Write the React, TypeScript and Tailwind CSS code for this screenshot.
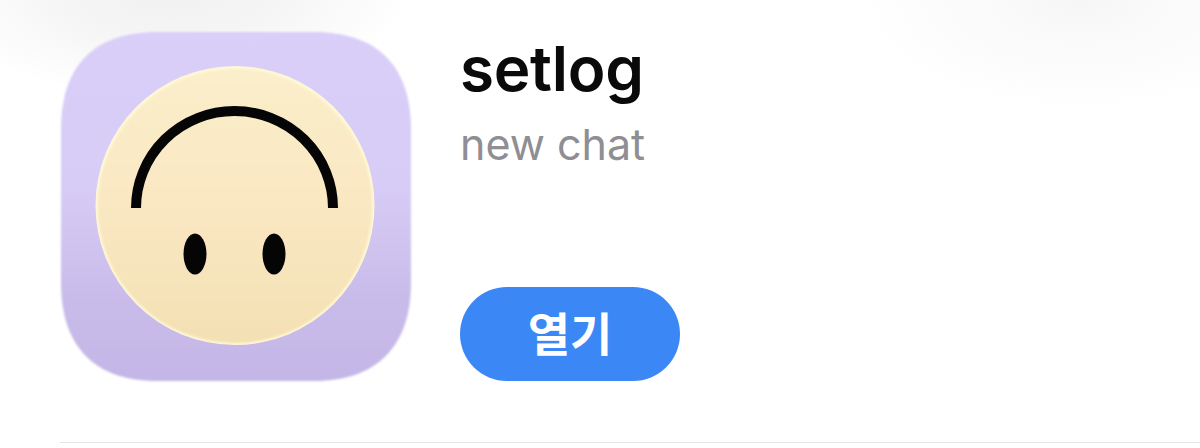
export default function App() {
  return (
    <div className="relative w-[1200px] h-[448px] overflow-hidden bg-white font-['Inter','Noto_Sans_CJK_KR',sans-serif]">
      <div className="absolute left-[-70px] top-[-120px] w-[480px] h-[220px] bg-[radial-gradient(closest-side,#f0f0f0_0%,#f6f6f6_50%,#ffffff_100%)]" />
      <div className="absolute left-[860px] top-[-110px] w-[440px] h-[220px] bg-[radial-gradient(closest-side,#f6f6f6_0%,#fbfbfb_50%,#ffffff_100%)]" />
      <div className="relative flex flex-col pt-[31px] pl-[60px]">
        <div className="flex gap-[49px] h-[350px]">
          <svg width="351" height="350" viewBox="0 0 351 350" className="shrink-0 overflow-visible">
            <defs>
              <linearGradient id="bg" x1="0" y1="0" x2="0" y2="1">
                <stop offset="0" stopColor="#d9cff8" />
                <stop offset="0.45" stopColor="#d7ccf6" />
                <stop offset="0.75" stopColor="#c9bcea" />
                <stop offset="1" stopColor="#c4b6e6" />
              </linearGradient>
              <linearGradient id="face" x1="0" y1="0" x2="0" y2="1">
                <stop offset="0" stopColor="#fbeecb" />
                <stop offset="0.6" stopColor="#f9e6c0" />
                <stop offset="1" stopColor="#f3e0b3" />
              </linearGradient>
              <filter id="soft" x="-5%" y="-5%" width="110%" height="110%">
                <feGaussianBlur stdDeviation="1.2" />
              </filter>
            </defs>
            <path
              d="M97 1H254C318 1 351 36 351 98V252C351 314 318 350 254 350H97C33 350 1 314 1 252V98C1 36 33 1 97 1Z"
              fill="url(#bg)"
              filter="url(#soft)"
            />
            <circle cx="175" cy="174.5" r="139.5" fill="#fef7d6" />
            <circle cx="175" cy="175" r="137" fill="url(#face)" filter="url(#soft)" />
            <path d="M76 177A98.5 97 0 0 1 273 177" fill="none" stroke="#050505" strokeWidth="10" />
            <ellipse cx="135" cy="223" rx="11.5" ry="20.5" fill="#050505" />
            <ellipse cx="214" cy="223" rx="11.5" ry="20.5" fill="#050505" />
          </svg>
          <div className="flex flex-col items-start">
            <div className="text-[62px] leading-[72px] mt-[2px] font-semibold text-[#0a0a0a] tracking-[-0.3px]">setlog</div>
            <div className="text-[43px] leading-[54px] mt-[12px] text-[#8e8e93]">new chat</div>
            <button className="mt-auto w-[220px] h-[94px] rounded-[47px] bg-[#3b87f6] text-white text-[46px] font-bold flex items-center justify-center">
              열기
            </button>
          </div>
        </div>
        <div className="mt-[61px] h-px bg-[#e4e4e6]" />
      </div>
    </div>
  );
}
